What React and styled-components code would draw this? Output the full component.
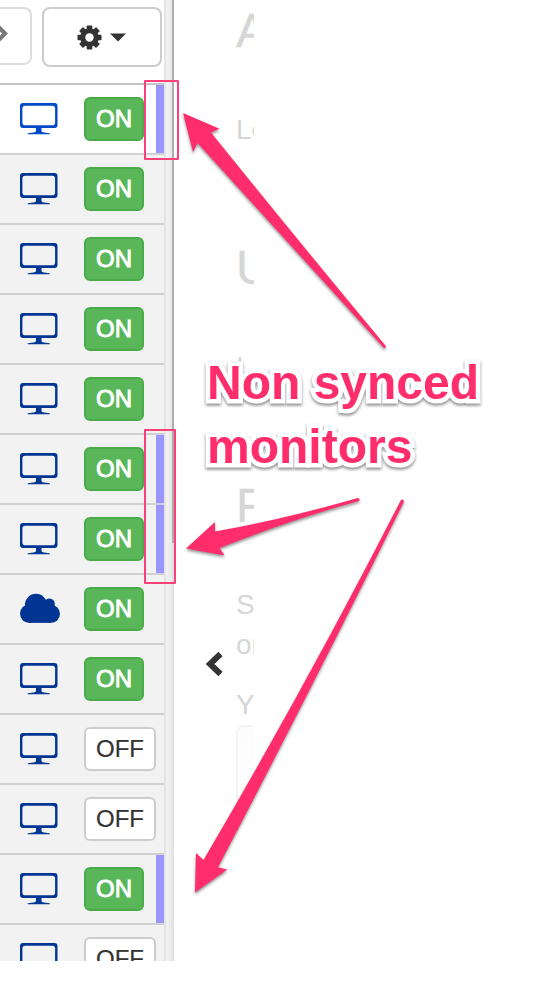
import React from "react";
import styled, { createGlobalStyle } from "styled-components";

const PINK = "#ff2d6b";

const GlobalStyle = createGlobalStyle`
  * { box-sizing: border-box; }
  body {
    margin: 0;
    background: #fff;
    font-family: "Liberation Sans", Arial, sans-serif;
    overflow: hidden;
  }
`;

const Page = styled.main`
  position: relative;
  display: flex;
  align-items: flex-start;
  width: 540px;
  height: 1002px;
  background: #fff;
  overflow: hidden;
`;

const Sidebar = styled.aside`
  display: flex;
  flex: none;
  width: 174px;
  height: 961px;
  overflow: hidden;
`;

const ListColumn = styled.div`
  display: flex;
  flex-direction: column;
  flex: none;
  width: 164px;
`;

const Toolbar = styled.header`
  display: flex;
  flex: none;
  align-items: flex-start;
  gap: 10px;
  height: 83px;
  padding-top: 7px;
`;

const ForwardButton = styled.button`
  display: flex;
  align-items: flex-start;
  width: 32px;
  height: 58px;
  padding: 15px 0 0;
  border: 2px solid #ccc;
  border-left: 0;
  border-radius: 0 8px 8px 0;
  background: #fff;
  opacity: 0.65;
`;

const SettingsButton = styled.button`
  display: flex;
  align-items: center;
  justify-content: center;
  gap: 8px;
  width: 120px;
  height: 60px;
  padding: 0 1px 0 0;
  border: 2px solid #ccc;
  border-radius: 8px;
  background: #fff;
`;

const Row = styled.div`
  display: flex;
  flex: none;
  align-items: flex-start;
  height: 70px;
  padding-left: 20px;
  border-top: 2px solid ${(p) => (p.$active ? "#c4c4c4" : "#d0d0d0")};
  background: ${(p) => (p.$active ? "#fff" : "#f2f2f2")};
`;

const IconSlot = styled.span`
  display: flex;
  flex: none;
  width: 64px;
  padding-top: 18px;
  color: ${(p) => (p.$active ? "#0049c9" : "#003594")};
`;

const Toggle = styled.button`
  flex: none;
  height: 44px;
  margin: 12px 0 0;
  padding: 0 10px;
  border: 2px solid ${(p) => (p.$on ? "#48ab48" : "#ccc")};
  border-radius: 6px;
  background: ${(p) => (p.$on ? "#5ab759" : "#fff")};
  color: ${(p) => (p.$on ? "#fff" : "#333")};
  font: 24px/38px "Liberation Sans", Arial, sans-serif;
  -webkit-text-stroke: ${(p) => (p.$on ? "0.9px #fff" : "0.2px #333")};
`;

const SyncMark = styled.span`
  align-self: stretch;
  width: 8px;
  margin-left: auto;
  background: #9996ff;
`;

const ScrollTrack = styled.div`
  flex: none;
  width: 10px;
  border-left: 2px solid #e4e4e4;
  background: linear-gradient(to right, #f3f3f3, #ececec 50%, #dedede);
`;

const ScrollThumb = styled.div`
  width: 2px;
  height: 543px;
  margin-left: auto;
  background: #adadad;
`;

const Content = styled.section`
  display: flex;
  flex-direction: column;
  flex: none;
  width: 51px;
  height: 940px;
  margin-left: 29px;
  overflow: hidden;
  color: #d6d6d6;
`;

const Card = styled.div`
  flex: none;
  width: 160px;
  height: ${(p) => p.$height}px;
  margin-bottom: 38px;
  padding-left: 32px;
  border: 1px solid #fdfdfd;
  border-top: 0;
  border-radius: 0 0 8px 8px;
`;

const Heading = styled.h2`
  margin: ${(p) => p.$top || 0}px 0 0;
  font-size: 48px;
  font-weight: 400;
  line-height: 56px;
  -webkit-text-stroke: 0.4px #d6d6d6;
`;

const Copy = styled.p`
  margin: ${(p) => p.$top || 0}px 0 0;
  font-size: 28px;
  line-height: 40px;
`;

const Field = styled.div`
  height: 80px;
  border: 2px solid #f4f4f4;
  border-bottom-color: #fcfcfc;
  border-radius: 8px;
  background: linear-gradient(#fcfcfc, #fefefe);
`;

const CollapseButton = styled.button`
  position: absolute;
  left: 206px;
  top: 651px;
  display: flex;
  padding: 0;
  border: 0;
  background: none;
`;

const Highlight = styled.div`
  position: absolute;
  left: ${(p) => p.$x}px;
  top: ${(p) => p.$y}px;
  width: ${(p) => p.$w}px;
  height: ${(p) => p.$h}px;
  border: 2px solid #fb4079;
  border-radius: 1px;
`;

const Arrows = styled.svg`
  position: absolute;
  left: 0;
  top: 0;
  filter: drop-shadow(0 2px 1.5px rgba(0, 0, 0, 0.42));
`;

const Caption = styled.p`
  position: absolute;
  left: 207px;
  top: 351px;
  margin: 0;
  color: ${PINK};
  font-size: 48px;
  font-weight: 700;
  line-height: 64px;
  white-space: nowrap;
  paint-order: stroke fill;
  -webkit-text-stroke: 9px #fff;
  stroke-linejoin: round;
  filter: drop-shadow(0 2px 1.5px rgba(0, 0, 0, 0.45));
`;

const MonitorIcon = () => (
  <svg width="38" height="32" viewBox="0 0 38 32" fill="currentColor">
    <path
      fillRule="evenodd"
      d="M3 0H34.5Q37.5 0 37.5 3V22Q37.5 25 34.5 25H21.5V28Q21.500 29.300 24 29.600L29.500 30.200Q31 31.200 29 31.200H9Q6.500 31.200 8 30.200L13.500 29.600Q16 29.300 16 28V25H3Q0 25 0 22V3Q0 0 3 0ZM5.200 2.700Q2.400 2.700 2.400 5.500V19.400Q2.400 22.200 5.200 22.200H32.300Q35.100 22.200 35.100 19.400V5.500Q35.100 2.700 32.300 2.700Z"
    />
  </svg>
);

const CloudIcon = () => (
  <svg width="40" height="32" viewBox="0 0 40 32" fill="currentColor">
    <circle cx="16" cy="11.700" r="11" />
    <circle cx="29.300" cy="11" r="5.500" />
    <circle cx="9.300" cy="20.600" r="9.300" />
    <circle cx="31" cy="20.800" r="9" />
    <path d="M9.300 12H31V29.900H9.300Z" />
  </svg>
);

const GearIcon = () => (
  <svg width="25" height="25" viewBox="-12.5 -12.5 25 25" fill="#333">
    {[0, 45, 90, 135].map((angle) => (
      <rect
        key={angle}
        x="-2.800"
        y="-12"
        width="5.600"
        height="24"
        rx="0.800"
        transform={`rotate(${angle})`}
      />
    ))}
    <circle r="9.300" />
    <circle r="4.200" fill="#fff" />
  </svg>
);

const CaretIcon = () => (
  <svg width="16" height="10" viewBox="0 0 16 10">
    <path d="M0 1.500H16L8 9.500Z" fill="#333" />
  </svg>
);

const ForwardIcon = () => (
  <svg width="9" height="20" viewBox="0 0 9 20">
    <path d="M0 1.500L8 9.500L0 17.500V11.500L2 9.500L0 7.500Z" fill="#333" />
  </svg>
);

const rows = [
  { on: true, active: true, unsynced: true },
  { on: true },
  { on: true },
  { on: true },
  { on: true },
  { on: true, unsynced: true },
  { on: true, unsynced: true },
  { on: true, cloud: true },
  { on: true },
  { on: false },
  { on: false },
  { on: true, unsynced: true },
  { on: false },
];

function MonitorRow({ on, active, unsynced, cloud }) {
  return (
    <Row $active={active}>
      <IconSlot $active={active}>{cloud ? <CloudIcon /> : <MonitorIcon />}</IconSlot>
      <Toggle $on={on}>{on ? "ON" : "OFF"}</Toggle>
      {unsynced && <SyncMark />}
    </Row>
  );
}

export default function App() {
  return (
    <>
      <GlobalStyle />
      <Page>
        <Sidebar>
          <ListColumn>
            <Toolbar>
              <ForwardButton aria-label="Forward">
                <ForwardIcon />
              </ForwardButton>
              <SettingsButton aria-label="Settings">
                <GearIcon />
                <CaretIcon />
              </SettingsButton>
            </Toolbar>
            {rows.map((row, i) => (
              <MonitorRow key={i} {...row} />
            ))}
          </ListColumn>
          <ScrollTrack>
            <ScrollThumb />
          </ScrollTrack>
        </Sidebar>

        <Content>
          <Card $height={182}>
            <Heading $top={3}>A</Heading>
            <Copy $top={51}>Lo</Copy>
          </Card>
          <Card $height={200}>
            <Heading $top={20}>U</Heading>
            <Copy $top={51}>I</Copy>
          </Card>
          <Card $height={449}>
            <Heading $top={20}>F</Heading>
            <Copy $top={51}>S</Copy>
            <Copy>on</Copy>
            <Copy $top={20}>Y</Copy>
            <Field />
          </Card>
        </Content>

        <CollapseButton aria-label="Collapse">
          <svg width="18" height="26" viewBox="0 0 18 26">
            <path d="M14.500 3L4 13L14.500 23" fill="none" stroke="#333" strokeWidth="6" />
          </svg>
        </CollapseButton>

        <Highlight $x={144} $y={80} $w={35} $h={80} />
        <Highlight $x={144} $y={429} $w={32} $h={155} />

        <Arrows width="540" height="1002" viewBox="0 0 540 1002" fill={PINK}>
          <path d="M183 113L219.500 128.700L211 132.500Q300 243 385.800 346Q386 348.500 384 348Q293 248 197.500 143L193 152Z" />
          <path d="M186 548.500L215 522V531.500Q285 519 358 498Q360.500 499 359 501Q290 520 219.500 548L224.700 555.500Z" />
          <path d="M195 892.500L196 853L203.500 860Q308 682 401 500Q403.500 498.500 404 501.500Q316 680 218 867.300L227.300 869.500Z" />
        </Arrows>

        <Caption>
          Non synced
          <br />
          monitors
        </Caption>
      </Page>
    </>
  );
}
